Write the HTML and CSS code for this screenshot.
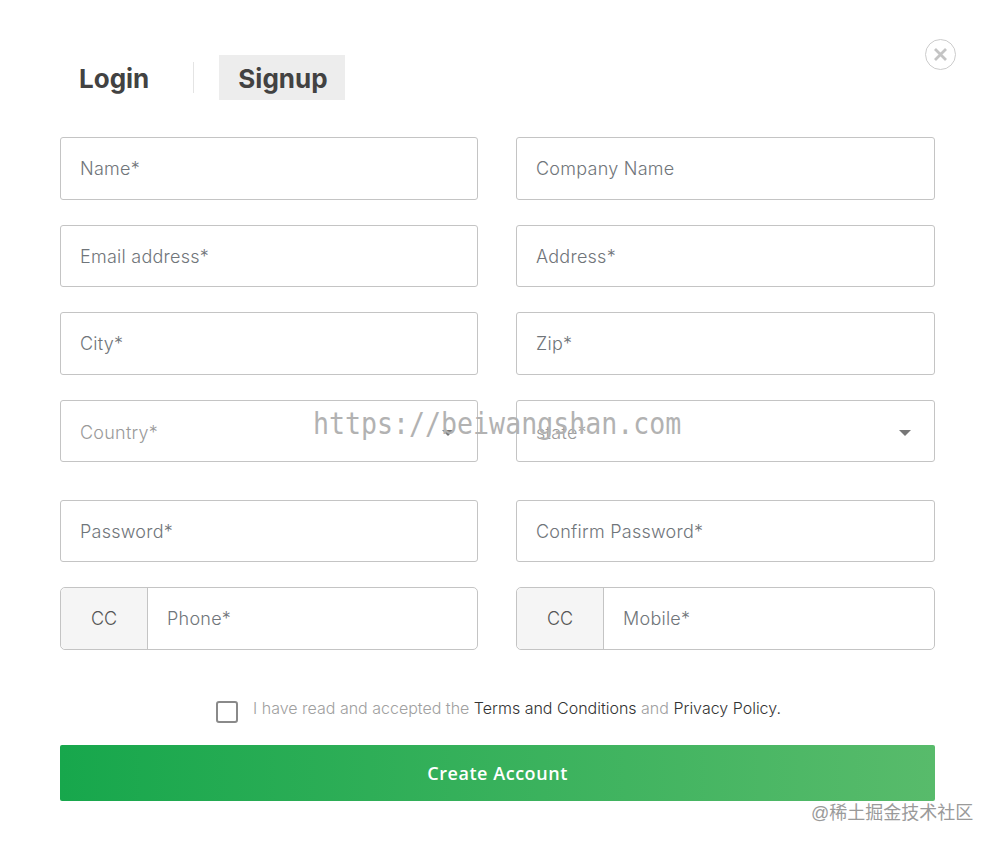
FILE: index.html
```html
<!DOCTYPE html>
<html>

<head>
    <meta charset="UTF-8">
    <title>Signup</title>
    <link rel="stylesheet" href="styles.css">
</head>

<body>
    <div class="modal">
        <button class="closeBtn" aria-label="Close">
            <svg width="15" height="15" viewBox="0 0 15 15">
                <path d="M2 2 L13 13 M13 2 L2 13" />
            </svg>
        </button>

        <!-- tabs -->
        <div class="tabs">
            <div class="tab">Login</div>
            <div class="tabDivider"></div>
            <div class="tab active">Signup</div>
        </div>

        <!-- form -->
        <div class="formGrid">
            <div class="field"><span class="hint">Name*</span></div>
            <div class="field"><span class="hint">Company Name</span></div>
            <div class="field short"><span class="hint">Email address*</span></div>
            <div class="field short"><span class="hint">Address*</span></div>
            <div class="field"><span class="hint">City*</span></div>
            <div class="field"><span class="hint">Zip*</span></div>
            <div class="field select"><span class="hint light">Country*</span><i class="caret"></i></div>
            <div class="field select"><span class="hint light">state*</span><i class="caret"></i></div>
            <div class="field short"><span class="hint">Password*</span></div>
            <div class="field short"><span class="hint">Confirm Password*</span></div>
            <div class="field phone"><div class="cc">CC</div><span class="hint">Phone*</span></div>
            <div class="field phone"><div class="cc">CC</div><span class="hint">Mobile*</span></div>
        </div>

        <div class="terms">
            <span class="checkbox"></span>
            <p>I have read and accepted the <a href="#">Terms and Conditions</a> and <a href="#">Privacy Policy.</a></p>
        </div>

        <button class="submitBtn">Create Account</button>
    </div>

    <div class="markUrl">https://beiwangshan.com</div>
    <div class="markSite">@稀土掘金技术社区</div>
</body>

</html>
```

FILE: styles.css
```css
* {
    margin: 0;
    padding: 0;
    box-sizing: border-box;
    font-family: Inter, "Liberation Sans", sans-serif;
}

body {
    background: #fff;
    min-height: 846px;
    overflow: hidden;
}

.modal {
    position: relative;
    width: 995px;
    padding: 55px 60px 0 60px;
}

.closeBtn {
    position: absolute;
    top: 39px;
    left: 925px;
    width: 31px;
    height: 31px;
    border: 1px solid #ccc;
    border-radius: 50%;
    background: #fff;
    display: flex;
    align-items: center;
    justify-content: center;
}

.closeBtn path {
    stroke: #c4c4c4;
    stroke-width: 2.8;
    fill: none;
}

.tabs {
    display: flex;
    align-items: center;
    height: 45px;
}

.tab {
    font-size: 26px;
    font-weight: 700;
    color: #424242;
    height: 45px;
    line-height: 47px;
    padding: 0 19px;
}

.tab.active {
    background: #ededed;
    width: 126px;
}

.tabDivider {
    width: 1px;
    height: 31px;
    background: #e4e4e4;
    margin: 0 25px;
}

.formGrid {
    display: grid;
    grid-template-columns: 418px 419px;
    column-gap: 38px;
    margin-top: 37px;
}

.field {
    display: flex;
    align-items: center;
    height: 63px;
    margin-bottom: 25px;
    padding: 0 19px;
    border: 1px solid #c4c4c4;
    border-radius: 3px;
    background: #fff;
}

.field.short {
    height: 62px;
}

.field.select {
    position: relative;
    height: 62px;
    margin-bottom: 38px;
    padding-top: 3px;
}

.field.phone {
    padding: 0;
    border-radius: 5px;
}

.hint {
    font-size: 18px;
    font-weight: 300;
    letter-spacing: 0.25px;
    color: #70757a;
}

.hint.light {
    color: #9a9a9a;
}

.caret {
    position: absolute;
    right: 23px;
    top: 29px;
    width: 0;
    height: 0;
    border-left: 6.5px solid transparent;
    border-right: 6.5px solid transparent;
    border-top: 6.5px solid #777;
}

.cc {
    width: 87px;
    height: 100%;
    margin-right: 19px;
    display: flex;
    align-items: center;
    justify-content: center;
    font-size: 18px;
    font-weight: 300;
    color: #555;
    background: #f5f5f5;
    border-right: 1px solid #c4c4c4;
    border-radius: 5px 0 0 5px;
}

.terms {
    display: flex;
    align-items: center;
    justify-content: center;
    margin-top: 15px;
    padding-left: 2px;
    height: 36px;
    gap: 15px;
}

.checkbox {
    width: 22px;
    height: 22px;
    margin-top: 8px;
    border: 2px solid #8a8a8a;
    border-radius: 3px;
}

.terms p {
    font-size: 16px;
    font-weight: 300;
    color: #a0a0a0;
}

.terms a {
    color: #333;
    text-decoration: none;
}

.submitBtn {
    display: block;
    width: 875px;
    height: 56px;
    margin-top: 19px;
    border: none;
    border-radius: 2px;
    background: linear-gradient(90deg, #17a74c, #58bb6b);
    color: #fff;
    font-family: "Open Sans", sans-serif;
    font-size: 18px;
    font-weight: 600;
    letter-spacing: 0.55px;
}

/* watermarks, laid over the screenshot */
.markUrl {
    position: absolute;
    top: 408px;
    left: 313px;
    font-family: "DejaVu Sans Mono", monospace;
    font-size: 26.6px;
    color: #b2b2b2;
    transform: scaleY(1.1);
}

.markSite {
    position: absolute;
    top: 798px;
    left: 811px;
    font-family: "Liberation Sans", "Noto Sans CJK SC", sans-serif;
    font-size: 18px;
    color: #9a9a9a;
}
```
